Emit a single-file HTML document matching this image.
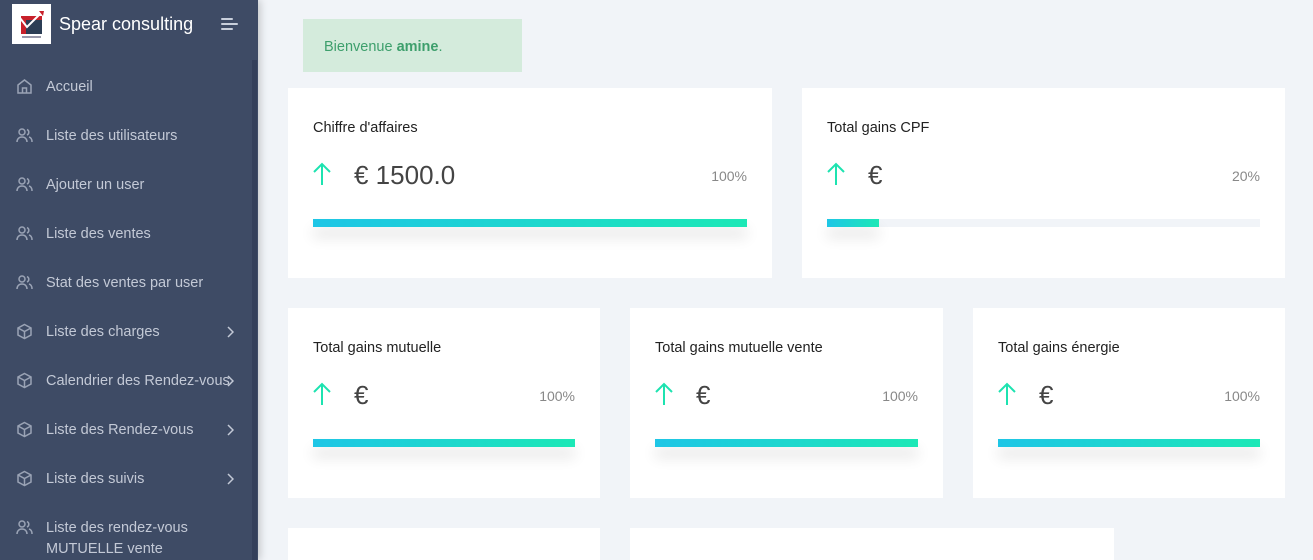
<!DOCTYPE html>
<html><head><meta charset="utf-8">
<style>
*{margin:0;padding:0;box-sizing:border-box}
html{overflow:hidden;height:560px}
body{width:1313px;height:560px;overflow:hidden;background:#f1f4f8;font-family:"Liberation Sans",sans-serif;position:relative}
.sb{position:absolute;left:0;top:0;width:258px;height:560px;background:#3e4b65;box-shadow:2px 0 8px rgba(0,0,0,.2)}
.scroll{position:absolute;left:252px;top:60px;width:5px;height:500px;background:#34405a}
.logo{position:absolute;left:12px;top:4px;width:39px;height:40px;background:#fff}
.brand{position:absolute;left:59px;top:14px;color:#fff;font-size:18px}
.ham{position:absolute;left:221px;top:18px}
.ham i{display:block;height:2px;background:#c8cfdb;margin-bottom:3px;border-radius:1px}
.mi{position:absolute;left:46px;color:#c3c9d6;font-size:14.5px;line-height:21px;margin-top:2px}
.ic{position:absolute;left:16px;margin-top:1px}
.chev{position:absolute;left:226px}
.alert{position:absolute;left:303px;top:19px;width:219px;height:53px;background:#d4ebdc;color:#3d9f6c;font-size:14.5px;padding:20px 0 0 21px}
.card{position:absolute;background:#fff}
.card h4{position:absolute;left:25px;top:32px;font-weight:normal;font-size:14.5px;color:#222}
.card .arr{position:absolute;left:25px;top:74px}
.card .val{position:absolute;left:66px;top:72px;font-size:26px;color:#444;font-weight:300}
.card .pct{position:absolute;right:25px;top:80px;font-size:14px;color:#888}
.bar{position:absolute;left:25px;right:25px;top:131px;height:8px;background:#f1f4f8}
.bar span{display:block;height:100%;background:linear-gradient(90deg,#1ec6e6,#1ce8b6);box-shadow:0 10px 14px rgba(0,0,0,.12)}
</style></head><body>
<div class="sb">
<div class="scroll"></div>
<div class="logo"><svg width="39" height="40" viewBox="0 0 39 40"><rect x="9" y="12" width="21" height="18" fill="#c8202a"/><rect x="14" y="16" width="16" height="14" fill="#2c3e55"/><path d="M8 14l7 9 7-7 8-8" stroke="#fff" stroke-width="2" fill="none"/><path d="M27 7l5 0-1 5z" fill="#c8202a"/><rect x="10" y="32" width="19" height="2" fill="#99a"/></svg></div>
<div class="brand">Spear consulting</div>
<div class="ham"><i style="width:12px"></i><i style="width:17px"></i><i style="width:12px"></i></div>

<svg class="ic" style="top:77px" width="17" height="17" viewBox="0 0 17 17" fill="none" stroke="#9aa3b5" stroke-width="1.5"><path d="M2 7l6.5-5 6.5 5v8H2z"/><path d="M6.5 15v-5h4v5"/></svg>
<div class="mi" style="top:75px">Accueil</div>

<svg class="ic" style="top:127px" width="17" height="15" viewBox="0 0 17 15" fill="none" stroke="#9aa3b5" stroke-width="1.5"><circle cx="6" cy="4" r="3"/><path d="M1 14c0-3 2-5 5-5s5 2 5 5"/><path d="M11 1.5a3 3 0 010 5.5M13 9c2 .5 3 2.5 3 5"/></svg>
<div class="mi" style="top:124px">Liste des utilisateurs</div>
<svg class="ic" style="top:176px" width="17" height="15" viewBox="0 0 17 15" fill="none" stroke="#9aa3b5" stroke-width="1.5"><circle cx="6" cy="4" r="3"/><path d="M1 14c0-3 2-5 5-5s5 2 5 5"/><path d="M11 1.5a3 3 0 010 5.5M13 9c2 .5 3 2.5 3 5"/></svg>
<div class="mi" style="top:173px">Ajouter un user</div>
<svg class="ic" style="top:225px" width="17" height="15" viewBox="0 0 17 15" fill="none" stroke="#9aa3b5" stroke-width="1.5"><circle cx="6" cy="4" r="3"/><path d="M1 14c0-3 2-5 5-5s5 2 5 5"/><path d="M11 1.5a3 3 0 010 5.5M13 9c2 .5 3 2.5 3 5"/></svg>
<div class="mi" style="top:222px">Liste des ventes</div>
<svg class="ic" style="top:274px" width="17" height="15" viewBox="0 0 17 15" fill="none" stroke="#9aa3b5" stroke-width="1.5"><circle cx="6" cy="4" r="3"/><path d="M1 14c0-3 2-5 5-5s5 2 5 5"/><path d="M11 1.5a3 3 0 010 5.5M13 9c2 .5 3 2.5 3 5"/></svg>
<div class="mi" style="top:271px">Stat des ventes par user</div>

<svg class="ic" style="top:322px" width="17" height="17" viewBox="0 0 17 17" fill="none" stroke="#9aa3b5" stroke-width="1.5"><path d="M8.5 1.5l6.5 3.5v7l-6.5 3.5L2 12V5z"/><path d="M2 5l6.5 3.5L15 5M8.5 8.5v7"/></svg>
<div class="mi" style="top:320px">Liste des charges</div>
<svg class="chev" style="top:326px" width="8" height="12" viewBox="0 0 8 12" fill="none" stroke="#c3c9d6" stroke-width="1.5"><path d="M2 1l5 5-5 5"/></svg>
<svg class="ic" style="top:371px" width="17" height="17" viewBox="0 0 17 17" fill="none" stroke="#9aa3b5" stroke-width="1.5"><path d="M8.5 1.5l6.5 3.5v7l-6.5 3.5L2 12V5z"/><path d="M2 5l6.5 3.5L15 5M8.5 8.5v7"/></svg>
<div class="mi" style="top:369px">Calendrier des Rendez-vous</div>
<svg class="chev" style="top:375px" width="8" height="12" viewBox="0 0 8 12" fill="none" stroke="#c3c9d6" stroke-width="1.5"><path d="M2 1l5 5-5 5"/></svg>
<svg class="ic" style="top:420px" width="17" height="17" viewBox="0 0 17 17" fill="none" stroke="#9aa3b5" stroke-width="1.5"><path d="M8.5 1.5l6.5 3.5v7l-6.5 3.5L2 12V5z"/><path d="M2 5l6.5 3.5L15 5M8.5 8.5v7"/></svg>
<div class="mi" style="top:418px">Liste des Rendez-vous</div>
<svg class="chev" style="top:424px" width="8" height="12" viewBox="0 0 8 12" fill="none" stroke="#c3c9d6" stroke-width="1.5"><path d="M2 1l5 5-5 5"/></svg>
<svg class="ic" style="top:469px" width="17" height="17" viewBox="0 0 17 17" fill="none" stroke="#9aa3b5" stroke-width="1.5"><path d="M8.5 1.5l6.5 3.5v7l-6.5 3.5L2 12V5z"/><path d="M2 5l6.5 3.5L15 5M8.5 8.5v7"/></svg>
<div class="mi" style="top:467px">Liste des suivis</div>
<svg class="chev" style="top:473px" width="8" height="12" viewBox="0 0 8 12" fill="none" stroke="#c3c9d6" stroke-width="1.5"><path d="M2 1l5 5-5 5"/></svg>
<svg class="ic" style="top:519px" width="17" height="15" viewBox="0 0 17 15" fill="none" stroke="#9aa3b5" stroke-width="1.5"><circle cx="6" cy="4" r="3"/><path d="M1 14c0-3 2-5 5-5s5 2 5 5"/><path d="M11 1.5a3 3 0 010 5.5M13 9c2 .5 3 2.5 3 5"/></svg>
<div class="mi" style="top:516px">Liste des rendez-vous<br>MUTUELLE vente</div>
</div>

<div class="alert">Bienvenue <b>amine</b>.</div>

<div class="card" style="left:288px;top:88px;width:484px;height:190px"><h4>Chiffre d'affaires</h4>
<svg class="arr" width="18" height="24" viewBox="0 0 18 24" fill="none" stroke="#1de3b0" stroke-width="2"><path d="M9 23V2M1 10l8-8 8 8"/></svg>
<div class="val">€ 1500.0</div><div class="pct">100%</div><div class="bar"><span style="width:100%"></span></div></div>

<div class="card" style="left:802px;top:88px;width:483px;height:190px"><h4>Total gains CPF</h4>
<svg class="arr" width="18" height="24" viewBox="0 0 18 24" fill="none" stroke="#1de3b0" stroke-width="2"><path d="M9 23V2M1 10l8-8 8 8"/></svg>
<div class="val">€</div><div class="pct">20%</div><div class="bar"><span style="width:12%"></span></div></div>

<div class="card" style="left:288px;top:308px;width:312px;height:190px"><h4>Total gains mutuelle</h4>
<svg class="arr" width="18" height="24" viewBox="0 0 18 24" fill="none" stroke="#1de3b0" stroke-width="2"><path d="M9 23V2M1 10l8-8 8 8"/></svg>
<div class="val">€</div><div class="pct">100%</div><div class="bar"><span style="width:100%"></span></div></div>

<div class="card" style="left:630px;top:308px;width:313px;height:190px"><h4>Total gains mutuelle vente</h4>
<svg class="arr" width="18" height="24" viewBox="0 0 18 24" fill="none" stroke="#1de3b0" stroke-width="2"><path d="M9 23V2M1 10l8-8 8 8"/></svg>
<div class="val">€</div><div class="pct">100%</div><div class="bar"><span style="width:100%"></span></div></div>

<div class="card" style="left:973px;top:308px;width:312px;height:190px"><h4>Total gains énergie</h4>
<svg class="arr" width="18" height="24" viewBox="0 0 18 24" fill="none" stroke="#1de3b0" stroke-width="2"><path d="M9 23V2M1 10l8-8 8 8"/></svg>
<div class="val">€</div><div class="pct">100%</div><div class="bar"><span style="width:100%"></span></div></div>

<div class="card" style="left:288px;top:528px;width:312px;height:32px"></div>
<div class="card" style="left:630px;top:528px;width:484px;height:32px"></div>
</body></html>
